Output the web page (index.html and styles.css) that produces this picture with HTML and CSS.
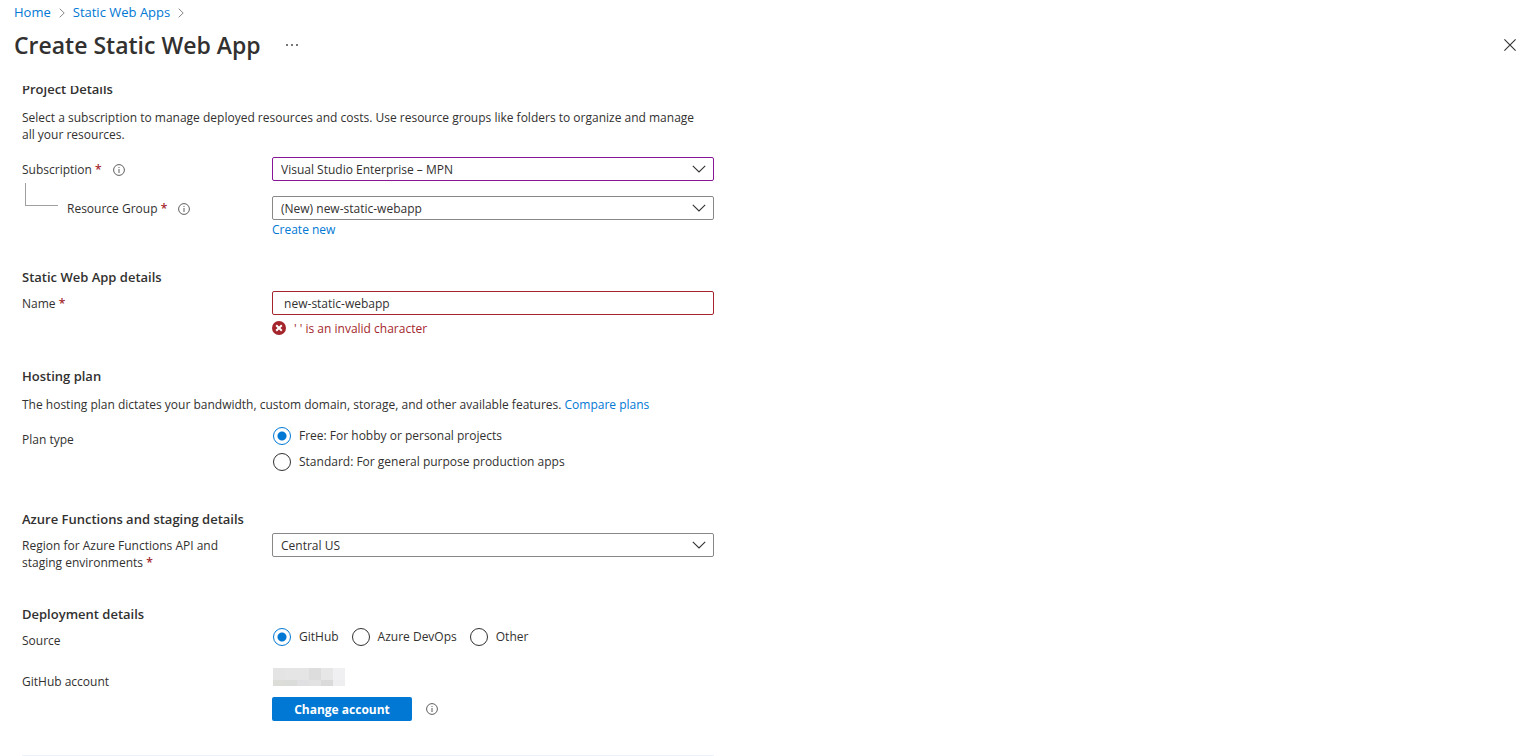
FILE: index.html
```html
<!DOCTYPE html>
<html lang="en">
<head>
<meta charset="utf-8">
<title>Create Static Web App</title>
<link rel="stylesheet" href="styles.css">
</head>
<body>
<svg class="sprite" aria-hidden="true">
  <symbol id="info" viewBox="0 0 12 12">
    <circle cx="6" cy="6" r="5.4" fill="none" stroke="currentColor" stroke-width="1"/>
    <path d="M5.5 5h1v4h-1zM5.5 3h1v1.1h-1z" fill="currentColor"/>
  </symbol>
  <symbol id="down" viewBox="0 0 14 8">
    <path d="M.8.9 7 7 13.2.9" fill="none" stroke="currentColor" stroke-width="1.1"/>
  </symbol>
  <symbol id="next" viewBox="0 0 6 10">
    <path d="M.7.7 5.2 5 .7 9.3" fill="none" stroke="currentColor" stroke-width="1"/>
  </symbol>
</svg>

<div class="blade">
  <header class="header">
    <nav class="crumbs" aria-label="Breadcrumb">
      <a href="#">Home</a>
      <svg class="crumb-sep" aria-hidden="true"><use href="#next"/></svg>
      <a href="#">Static Web Apps</a>
      <svg class="crumb-sep" aria-hidden="true"><use href="#next"/></svg>
    </nav>
    <div class="title-bar">
      <h1>Create Static Web App</h1>
      <button class="icon-button" type="button" aria-label="More">
        <svg width="12" height="2" viewBox="0 0 12 2"><path d="M0 0h2v2H0zM5 0h2v2H5zM10 0h2v2h-2z" fill="#797775"/></svg>
      </button>
      <button class="icon-button close" type="button" aria-label="Close">
        <svg width="12" height="12" viewBox="0 0 12 12"><path d="M.4.4l11.2 11.2M11.6.4.4 11.6" stroke="#323130" stroke-width="1.1"/></svg>
      </button>
    </div>
  </header>

  <main class="content">
    <form class="form">
      <section>
        <h2>Project Details</h2>
        <p class="intro">Select a subscription to manage deployed resources and costs. Use resource groups like folders to organize and manage all your resources.</p>
        <div class="row">
          <div class="label">
            <label for="subscription">Subscription <span class="req">*</span></label>
            <svg class="info" role="img" aria-label="Information"><use href="#info"/></svg>
          </div>
          <div class="select accent">
            <select id="subscription"><option>Visual Studio Enterprise – MPN</option></select>
            <svg class="chevron" aria-hidden="true"><use href="#down"/></svg>
          </div>
        </div>
        <div class="row">
          <div class="label">
            <span class="branch"></span>
            <label for="group">Resource Group <span class="req">*</span></label>
            <svg class="info" role="img" aria-label="Information"><use href="#info"/></svg>
          </div>
          <div>
            <div class="select">
              <select id="group"><option>(New) new-static-webapp</option></select>
              <svg class="chevron" aria-hidden="true"><use href="#down"/></svg>
            </div>
            <a class="below" href="#">Create new</a>
          </div>
        </div>
      </section>

      <section>
        <h2>Static Web App details</h2>
        <div class="row">
          <div class="label"><label for="name">Name <span class="req">*</span></label></div>
          <div>
            <input class="text invalid" id="name" type="text" value=" new-static-webapp" aria-describedby="name-error">
            <div class="error" id="name-error">
              <svg width="14" height="14" viewBox="0 0 14 14" aria-hidden="true"><circle cx="7" cy="7" r="7" fill="#a4262c"/><path d="M4.2 4.2l5.6 5.6M9.8 4.2 4.2 9.8" stroke="#fff" stroke-width="2"/></svg>
              <span>' ' is an invalid character</span>
            </div>
          </div>
        </div>
      </section>

      <section>
        <h2>Hosting plan</h2>
        <p class="intro">The hosting plan dictates your bandwidth, custom domain, storage, and other available features. <a href="#">Compare plans</a></p>
        <div class="row" role="radiogroup" aria-labelledby="plan">
          <div class="label" id="plan">Plan type</div>
          <div class="radios stacked">
            <label><input type="radio" name="plan" checked>Free: For hobby or personal projects</label>
            <label><input type="radio" name="plan">Standard: For general purpose production apps</label>
          </div>
        </div>
      </section>

      <section>
        <h2>Azure Functions and staging details</h2>
        <div class="row">
          <div class="label"><label for="region">Region for Azure Functions API and staging environments <span class="req">*</span></label></div>
          <div class="select">
            <select id="region"><option>Central US</option></select>
            <svg class="chevron" aria-hidden="true"><use href="#down"/></svg>
          </div>
        </div>
      </section>

      <section>
        <h2>Deployment details</h2>
        <div class="row" role="radiogroup" aria-labelledby="source">
          <div class="label" id="source">Source</div>
          <div class="radios">
            <label><input type="radio" name="source" checked>GitHub</label>
            <label><input type="radio" name="source">Azure DevOps</label>
            <label><input type="radio" name="source">Other</label>
          </div>
        </div>
        <div class="row">
          <div class="label account-label">GitHub account</div>
          <div class="account">
            <svg class="redacted" width="72" height="18" viewBox="0 0 72 18" role="img" aria-label="Hidden account name">
              <path fill="#e3e4e3" d="M0 0h12v12H0z"/><path fill="#e5e5e5" d="M12 0h24v12H12z"/>
              <path fill="#dddddd" d="M36 0h12v12H36z"/><path fill="#e7e7e7" d="M48 0h12v12H48z"/>
              <path fill="#f0f0f3" d="M60 0h12v12H60z"/><path fill="#dcdcd9" d="M0 12h12v6H0z"/>
              <path fill="#dadcda" d="M12 12h12v6H12z"/><path fill="#e0e0e2" d="M24 12h12v6H24z"/>
              <path fill="#e2e2e2" d="M36 12h12v6H36z"/><path fill="#dadada" d="M48 12h12v6H48z"/>
              <path fill="#eeeef1" d="M60 12h12v6H60z"/>
            </svg>
            <div class="actions">
              <button class="primary" type="button">Change account</button>
              <svg class="info" role="img" aria-label="Information"><use href="#info"/></svg>
            </div>
          </div>
        </div>
      </section>
      <hr>
    </form>
  </main>
</div>
</body>
</html>
```
FILE: styles.css
```css
* { box-sizing: border-box; }

body {
  margin: 0;
  background: #fff;
  color: #323130;
  font: 12px/17px "Segoe UI", "Open Sans", "Noto Sans", sans-serif;
}

a { color: #0078d4; text-decoration: none; }

.sprite { display: none; }

.blade {
  display: flex;
  flex-direction: column;
  height: 100vh;
}

.header { padding: 4px 11px 25px 14px; }

.crumbs { display: flex; align-items: center; gap: 8px; font-size: 13px; }
.crumb-sep { width: 6px; height: 10px; color: #8a8886; }

.title-bar { display: flex; align-items: center; margin-top: 8px; }
h1 { margin: 0 25px 0 0; font-size: 23px; line-height: 32px; font-weight: 600; }

.icon-button {
  display: flex;
  padding: 0;
  border: 0;
  background: none;
}
.close { margin-left: auto; }

.content { flex: 1; min-height: 0; overflow: hidden; padding: 0 22px; }
.form { max-width: 692px; margin-top: -5px; }

section { margin-bottom: 31px; }
h2 { margin: 0 0 5px; font-size: 13px; line-height: 17px; font-weight: 600; }
.intro { margin: 11px 0 14px; padding-right: 12px; }

.row {
  display: grid;
  grid-template-columns: 250px minmax(0, 1fr);
  align-items: start;
}
.row + .row { margin-top: 14px; }

.label { display: flex; padding: 4px 30px 4px 0; }
.account-label { padding-top: 6px; }
.req { color: #a4262c; font-weight: 600; }
.info { width: 12px; height: 12px; color: #605e5c; }
.label .info { margin: 3px 0 0 11px; }

.branch {
  width: 33px;
  height: 23px;
  margin: -17px 9px 0 3px;
  border: solid #a19f9d;
  border-width: 0 0 1px 1px;
}

.select { display: grid; align-items: center; }
.select > * { grid-area: 1 / 1; }
.chevron {
  width: 14px;
  height: 8px;
  margin-right: 8px;
  justify-self: end;
  pointer-events: none;
}

select, .text {
  display: block;
  width: 100%;
  height: 24px;
  margin: 0;
  padding: 0 8px;
  border: 1px solid #8a8886;
  border-radius: 2px;
  background: #fff;
  color: inherit;
  font: inherit;
  appearance: none;
}
.accent select { border-color: #881798; }
.text.invalid { border-color: #a4262c; }

.below { display: block; margin-top: 1px; }

.error { display: flex; align-items: flex-start; gap: 8px; margin-top: 5px; color: #a4262c; }
.error svg { margin-top: 1px; }

.radios { display: flex; gap: 13px; padding-left: 1px; }
.radios.stacked { flex-direction: column; gap: 8px; padding-bottom: 9px; }
.radios label { display: flex; align-items: center; gap: 8px; height: 18px; line-height: 20px; }
.radios input {
  width: 18px;
  height: 18px;
  margin: 0;
  border: 1px solid #323130;
  border-radius: 50%;
  appearance: none;
}
.radios input:checked {
  border-color: #0078d4;
  background: radial-gradient(circle, #0078d4 4px, transparent 5px);
}

.redacted { display: block; margin: 1px 0 11px 1px; }
.actions { display: flex; align-items: center; gap: 14px; }
.primary {
  width: 140px;
  height: 24px;
  padding: 0;
  border: 0;
  border-radius: 2px;
  background: #0078d4;
  color: #fff;
  font: inherit;
  font-weight: 700;
}

hr { margin: 34px 0 0; border: 0; border-top: 1px solid #edf2fa; }
```
